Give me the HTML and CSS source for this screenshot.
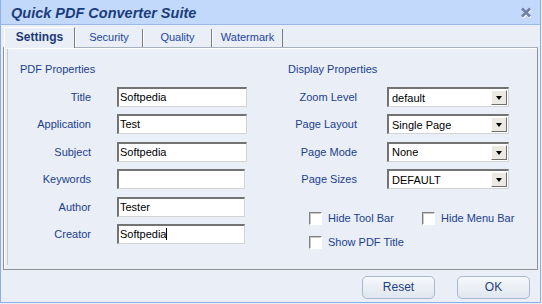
FILE: index.html
```html
<html>
    <head>
        <link rel="stylesheet" href="styles.css">
    </head>
    <body>
        <div class="window">
            <div class="titlebar">
                <span class="title">Quick PDF Converter Suite</span>
                <svg class="close" width="12" height="11" viewBox="0 0 12 11">
                    <path d="M2 2 L10 10 M10 2 L2 10" stroke="#fff" stroke-width="2.6" transform="translate(0.6,0.6)"/>
                    <path d="M2 1.5 L10 9.5 M10 1.5 L2 9.5" stroke="#6e82a6" stroke-width="2.6"/>
                </svg>
            </div>
            <div class="tabs">
                <div class="tab active">Settings</div>
                <div class="tab w68">Security</div>
                <div class="tab w69">Quality</div>
                <div class="tab w71">Watermark</div>
            </div>
            <div class="panel">
                <div class="section left">
                    <div class="heading">PDF Properties</div>
                    <div class="fields">
                        <label>Title</label><div class="edit">Softpedia</div>
                        <label>Application</label><div class="edit">Test</div>
                        <label>Subject</label><div class="edit">Softpedia</div>
                        <label>Keywords</label><div class="edit narrow"></div>
                        <label>Author</label><div class="edit narrow">Tester</div>
                        <label>Creator</label><div class="edit narrow"><span class="caret">Softpedia</span></div>
                    </div>
                </div>
                <div class="section right">
                    <div class="heading">Display Properties</div>
                    <div class="fields combos">
                        <label>Zoom Level</label><div class="combo"><span>default</span><span class="drop"></span></div>
                        <label>Page Layout</label><div class="combo"><span>Single Page</span><span class="drop"></span></div>
                        <label>Page Mode</label><div class="combo"><span>None</span><span class="drop"></span></div>
                        <label>Page Sizes</label><div class="combo"><span>DEFAULT</span><span class="drop"></span></div>
                    </div>
                    <div class="checks">
                        <div class="check"><span class="box"></span>Hide Tool Bar</div>
                        <div class="check"><span class="box"></span>Hide Menu Bar</div>
                        <div class="check"><span class="box"></span>Show PDF Title</div>
                    </div>
                </div>
            </div>
            <div class="footer">
                <div class="button">Reset</div>
                <div class="button">OK</div>
            </div>
        </div>
    </body>
</html>
```
FILE: styles.css
```css
body {margin: 0; background-color: #e9eef7; font-family: "Liberation Sans", Arial, sans-serif; font-size: 11px; color: #1c3f8c;}
.window {width: 541px; height: 303px; box-sizing: border-box; border: 1px solid #8db0e3; border-top: none; display: flex; flex-direction: column; background-color: #e9eef7;}

.titlebar {height: 25px; box-sizing: border-box; background-color: #c2d9fb; border-bottom: 1px solid #98b9e8; display: flex; align-items: center; justify-content: space-between; padding: 0 8px 0 10px;}
.title {font-size: 14.5px; font-weight: bold; font-style: italic; color: #1c3d7a; padding-top: 1px;}
.close {margin-top: 1px;}

.tabs {display: flex; align-items: flex-end; height: 20px; margin-top: 2px; padding-left: 3px; position: relative; z-index: 1;}
.tab {height: 18px; box-sizing: border-box; border-left: 1px solid #fff; border-right: 1px solid #7c7c7c; text-align: center; line-height: 17px; color: #2246a0; font-size: 11px;}
.tab.active {width: 71px; height: 21px; margin-bottom: -1px; border-top: 1px solid #fff; background-color: #e9eef7; font-weight: bold; font-size: 12px; color: #1b3a78; line-height: 18px;}
.w68 {width: 68px;}
.w69 {width: 69px;}
.w71 {width: 71px;}

.panel {height: 223px; box-sizing: border-box; margin: 0 2px; border: 1px solid #8e9196; border-top-color: #a7b0bd; box-shadow: inset 1px 1px 0 #fff; background: linear-gradient(#c3c8d1, #c3c8d1) 3px 1px / 1px calc(100% - 5px) no-repeat; display: flex; padding: 15px 0 0 16px; gap: 41px;}
.heading {line-height: 13px; margin-bottom: 11px;}
.fields {display: grid; grid-template-columns: 71px 130px; column-gap: 26px; row-gap: 7.4px;}
.fields label {text-align: right; height: 20px; line-height: 20px; white-space: nowrap;}
.combos {grid-template-columns: 69px 122px; column-gap: 30px;}

.edit {height: 20px; box-sizing: border-box; background-color: #fff; border-style: solid; border-width: 2px 1px 1px 2px; border-color: #737373 #d4d4d4 #d4d4d4 #737373; color: #000; padding-left: 1px; line-height: 17px; white-space: nowrap;}
.edit.narrow {width: 128px;}
.caret {border-right: 1px solid #000;}

.combo {height: 20px; box-sizing: border-box; background-color: #fff; border-style: solid; border-width: 2px 1px 1px 2px; border-color: #737373 #d4d4d4 #d4d4d4 #737373; color: #000; display: flex; align-items: center; justify-content: space-between; padding-left: 3px;}
.drop {width: 16px; height: 15px; box-sizing: border-box; margin-right: 1px; background-color: #ece9e3; border-style: solid; border-width: 1px; border-color: #fff #6f6f6f #6f6f6f #fff; position: relative;}
.drop::after {content: ""; position: absolute; left: 4px; top: 5px; border-left: 3.5px solid transparent; border-right: 3.5px solid transparent; border-top: 4px solid #000;}

.checks {display: grid; grid-template-columns: 113px auto; row-gap: 11px; margin: 22.8px 0 0 21px;}
.check {display: flex; align-items: center; gap: 6px; height: 13px; white-space: nowrap;}
.box {width: 13px; height: 13px; box-sizing: border-box; background-color: #fff; border-style: solid; border-width: 1px; border-color: #7f7f7f #fff #fff #7f7f7f; box-shadow: inset 1px 1px 0 #c8c8c8;}

.footer {display: flex; justify-content: flex-end; gap: 22px; padding: 6px 10px 0 0;}
.button {width: 73px; height: 23px; box-sizing: border-box; border: 1px solid #a8b8cd; border-radius: 5px; background: linear-gradient(#f6f8fb, #dfe6ef); text-align: center; line-height: 21px; font-size: 12px; color: #1e3f80;}
```
